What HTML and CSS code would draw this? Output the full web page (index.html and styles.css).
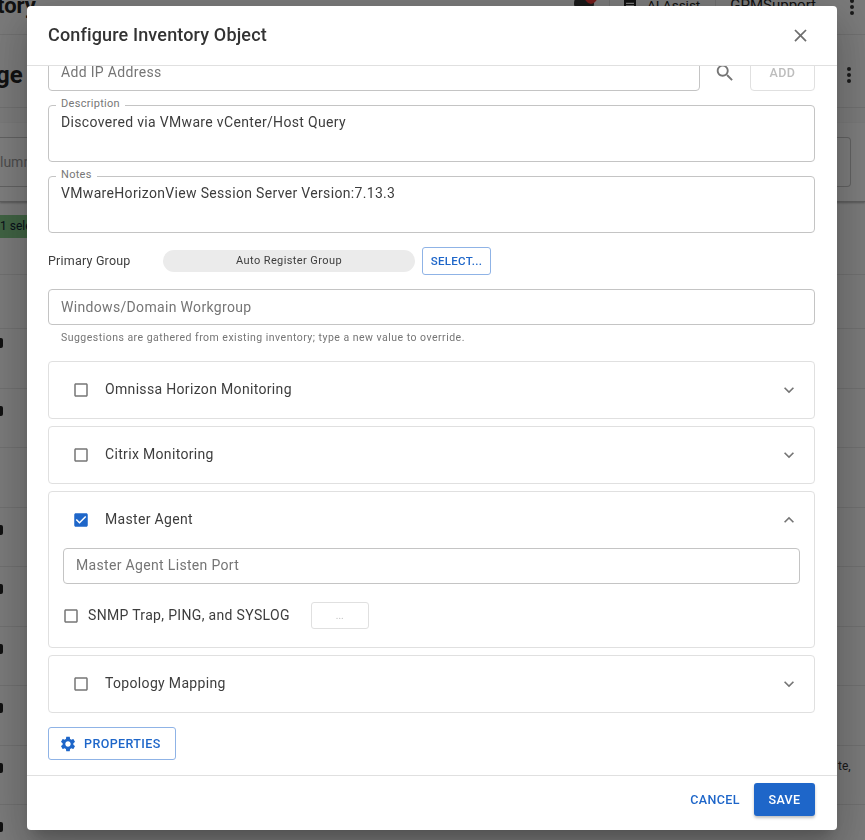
FILE: index.html
```html
<!DOCTYPE html>
<html lang="en">
<head>
<meta charset="utf-8">
<title>Configure Inventory Object</title>
<link rel="stylesheet" href="styles.css">
</head>
<body>
<div class="page">
  <header class="topbar">
    <span class="app-title">tory</span>
    <div class="top-actions">
      <span class="avatar"><span class="avatar-badge"></span></span>
      <span class="top-sep"></span>
      <svg class="ai-icon" viewBox="0 0 24 24"><path d="M3 3h18v18H3zM6 7v2h12V7zm0 4v2h12v-2zm0 4v2h12v-2z"/></svg>
      <span class="top-text">AI Assist</span>
      <span class="top-sep"></span>
      <span class="top-user">GPMSupport</span>
      <span class="dots"><i></i><i></i><i></i></span>
    </div>
  </header>
  <div class="title-band">
    <span class="page-title">ge</span>
    <span class="dots"><i></i><i></i><i></i></span>
  </div>
  <div class="filter-card">
    <div class="filter-box">lumn</div>
  </div>
  <div class="chip-row"><span class="chip">1 sele</span></div>
  <div class="row row-first"></div>
  <div class="row row-short"><i class="mark"></i></div>
  <div class="row"><i class="mark"></i></div>
  <div class="row"></div>
  <div class="row"><i class="mark"></i></div>
  <div class="row"><i class="mark"></i></div>
  <div class="row"><i class="mark"></i></div>
  <div class="row"><i class="mark"></i></div>
  <div class="row row-note"><i class="mark"></i><span class="row-note-text">te,</span></div>
  <div class="row"><i class="mark"></i></div>
</div>

<div class="scrim"></div>

<div class="dialog" role="dialog" aria-label="Configure Inventory Object">
  <div class="dialog-head">
    <h2 class="dialog-title">Configure Inventory Object</h2>
    <svg class="close-icon" viewBox="0 0 24 24"><path d="M19 6.41 17.59 5 12 10.59 6.41 5 5 6.41 10.59 12 5 17.59 6.41 19 12 13.41 17.59 19 19 17.59 13.41 12z"/></svg>
  </div>

  <div class="dialog-body">
    <div class="scroll-inner">
      <div class="ip-row">
        <div class="field field-single field-raised grow"><span class="placeholder">Add IP Address</span></div>
        <svg class="search-icon" viewBox="0 0 24 24"><path d="M15.5 14h-.79l-.28-.27C15.41 12.59 16 11.11 16 9.5 16 5.91 13.09 3 9.5 3S3 5.91 3 9.5 5.91 16 9.5 16c1.61 0 3.09-.59 4.23-1.57l.27.28v.79l5 4.99L20.49 19l-4.99-5zm-6 0C7.01 14 5 11.99 5 9.5S7.01 5 9.5 5 14 7.01 14 9.5 11.99 14 9.5 14z"/></svg>
        <button class="btn-add" disabled>ADD</button>
      </div>

      <div class="field field-multi">
        <span class="float-label">Description</span>
        <span class="value">Discovered via VMware vCenter/Host Query</span>
      </div>

      <div class="field field-multi">
        <span class="float-label">Notes</span>
        <span class="value">VMwareHorizonView Session Server Version:7.13.3</span>
      </div>

      <div class="group-row">
        <span class="group-label">Primary Group</span>
        <span class="group-pill">Auto Register Group</span>
        <button class="btn-select">SELECT...</button>
      </div>

      <div class="field field-single"><span class="placeholder">Windows/Domain Workgroup</span></div>
      <p class="helper">Suggestions are gathered from existing inventory; type a new value to override.</p>

      <section class="accordion accordion-first">
        <div class="acc-summary">
          <svg class="check" viewBox="0 0 24 24"><path d="M19 5v14H5V5h14m0-2H5c-1.1 0-2 .9-2 2v14c0 1.1.9 2 2 2h14c1.1 0 2-.9 2-2V5c0-1.1-.9-2-2-2z"/></svg>
          <span class="acc-label">Omnissa Horizon Monitoring</span>
          <svg class="chevron" viewBox="0 0 24 24"><path d="M16.59 8.59 12 13.17 7.41 8.59 6 10l6 6 6-6z"/></svg>
        </div>
      </section>

      <section class="accordion">
        <div class="acc-summary">
          <svg class="check" viewBox="0 0 24 24"><path d="M19 5v14H5V5h14m0-2H5c-1.1 0-2 .9-2 2v14c0 1.1.9 2 2 2h14c1.1 0 2-.9 2-2V5c0-1.1-.9-2-2-2z"/></svg>
          <span class="acc-label">Citrix Monitoring</span>
          <svg class="chevron" viewBox="0 0 24 24"><path d="M16.59 8.59 12 13.17 7.41 8.59 6 10l6 6 6-6z"/></svg>
        </div>
      </section>

      <section class="accordion">
        <div class="acc-summary">
          <svg class="check check-on" viewBox="0 0 24 24"><path d="M19 3H5c-1.11 0-2 .9-2 2v14c0 1.1.89 2 2 2h14c1.11 0 2-.9 2-2V5c0-1.1-.89-2-2-2zm-9 14l-5-5 1.41-1.41L10 14.17l7.59-7.59L19 8l-9 9z"/></svg>
          <span class="acc-label">Master Agent</span>
          <svg class="chevron" viewBox="0 0 24 24"><path d="M12 8l-6 6 1.41 1.41L12 10.83l4.59 4.58L18 14z"/></svg>
        </div>
        <div class="acc-details">
          <div class="field field-single field-raised"><span class="placeholder">Master Agent Listen Port</span></div>
          <div class="snmp-row">
            <svg class="check check-inline" viewBox="0 0 24 24"><path d="M19 5v14H5V5h14m0-2H5c-1.1 0-2 .9-2 2v14c0 1.1.9 2 2 2h14c1.1 0 2-.9 2-2V5c0-1.1-.9-2-2-2z"/></svg>
            <span class="acc-label snmp-label">SNMP Trap, PING, and SYSLOG</span>
            <button class="btn-more" disabled>...</button>
          </div>
        </div>
      </section>

      <section class="accordion">
        <div class="acc-summary">
          <svg class="check" viewBox="0 0 24 24"><path d="M19 5v14H5V5h14m0-2H5c-1.1 0-2 .9-2 2v14c0 1.1.9 2 2 2h14c1.1 0 2-.9 2-2V5c0-1.1-.9-2-2-2z"/></svg>
          <span class="acc-label">Topology Mapping</span>
          <svg class="chevron" viewBox="0 0 24 24"><path d="M16.59 8.59 12 13.17 7.41 8.59 6 10l6 6 6-6z"/></svg>
        </div>
      </section>

      <button class="btn-props">
        <svg class="gear" viewBox="0 0 24 24"><path d="M19.14 12.94c.04-.3.06-.61.06-.94 0-.32-.02-.64-.07-.94l2.03-1.58c.18-.14.23-.41.12-.61l-1.92-3.32c-.12-.22-.37-.29-.59-.22l-2.39.96c-.5-.38-1.03-.7-1.62-.94l-.36-2.54c-.04-.24-.24-.41-.48-.41h-3.84c-.24 0-.43.17-.47.41l-.36 2.54c-.59.24-1.13.57-1.62.94l-2.39-.96c-.22-.08-.47 0-.59.22L2.74 8.87c-.12.21-.08.47.12.61l2.03 1.58c-.05.3-.09.63-.09.94s.02.64.07.94l-2.03 1.58c-.18.14-.23.41-.12.61l1.92 3.32c.12.22.37.29.59.22l2.39-.96c.5.38 1.03.7 1.62.94l.36 2.54c.05.24.24.41.48.41h3.84c.24 0 .44-.17.47-.41l.36-2.54c.59-.24 1.13-.56 1.62-.94l2.39.96c.22.08.47 0 .59-.22l1.92-3.32c.12-.22.07-.47-.12-.61l-2.01-1.58zM12 15.6c-1.98 0-3.6-1.62-3.6-3.6s1.62-3.6 3.6-3.6 3.6 1.62 3.6 3.6-1.62 3.6-3.6 3.6z"/></svg>
        PROPERTIES
      </button>
    </div>
  </div>

  <div class="dialog-foot">
    <button class="btn-cancel">CANCEL</button>
    <button class="btn-save">SAVE</button>
  </div>
</div>
</body>
</html>
```

FILE: styles.css
```css
* { box-sizing: border-box; }
html, body { margin: 0; height: 100%; overflow: hidden; }
body {
  font-family: Roboto, "Liberation Sans", sans-serif;
  background: #f5f5f5;
  color: #333;
}
button { font-family: inherit; margin: 0; }

/* page behind the dialog */
.page { margin-top: -24px; width: 865px; color: #222; }
.topbar {
  height: 59px;
  padding-top: 16px;
  display: flex;
  justify-content: space-between;
  align-items: flex-start;
  border-bottom: 1px solid #e0e0e0;
}
.app-title { font-size: 22px; font-weight: 700; line-height: 24px; margin-left: -3px; margin-top: 2px; }
.top-actions { display: flex; align-items: flex-start; padding-right: 11px; }
.avatar { width: 20px; height: 24px; background: #333; border-radius: 50%; position: relative; }
.avatar-badge { position: absolute; left: 10px; top: -8px; width: 14px; height: 20px; border-radius: 50%; background: #e53935; }
.top-sep { width: 1px; height: 36px; background: #ddd; margin: 0 14px 0 15px; }
.ai-icon { width: 16px; height: 16px; margin: 6px 9px 0 -2px; fill: #222; }
.top-text { font-size: 13.5px; line-height: 22px; margin-top: 2px; }
.top-user { font-size: 15px; line-height: 22px; margin-top: 2px; margin-right: 34px; }
.dots { display: flex; flex-direction: column; gap: 2px; width: 4px; margin-top: 7px; }
.dots i { width: 4px; height: 4px; border-radius: 50%; background: #333; display: block; }
.title-band {
  height: 73px;
  padding: 7px 14px 0 0;
  display: flex;
  justify-content: space-between;
  align-items: center;
  border-bottom: 1px solid #e0e0e0;
}
.title-band .dots { margin-top: 0; }
.page-title { font-size: 24px; font-weight: 700; margin-left: -4px; }
.filter-card {
  margin-top: 15px;
  height: 79px;
  padding-top: 14px;
  background: #fafafa;
  border-bottom: 1px solid #bbb;
  box-shadow: 0 1px 2px rgba(0,0,0,.3);
}
.filter-box {
  height: 50px;
  width: 851px;
  border: 1px solid #c4c4c4;
  border-left: 0;
  border-radius: 0 4px 4px 0;
  color: #999;
  font-size: 14px;
  line-height: 48px;
}
.chip-row { height: 73px; padding-top: 13px; border-bottom: 1px solid #e0e0e0; }
.chip { display: block; height: 23px; background: #7fc586; color: #123; font-size: 12px; line-height: 23px; width: 200px; }
.row { height: 59.5px; padding-top: 17px; border-bottom: 1px solid #e0e0e0; position: relative; }
.row-first { height: 54px; }
.row-short { padding-top: 9px; }
.mark { display: block; width: 3px; height: 10px; background: #222; border-radius: 0 2px 2px 0; }
.row-note-text { position: absolute; left: 838px; top: 13px; font-size: 12px; color: #333; }

.scrim { position: fixed; inset: 0; background: rgba(0,0,0,.5); }

/* dialog */
.dialog {
  position: fixed;
  left: 27px;
  top: 6px;
  width: 810px;
  height: 824px;
  background: #fff;
  border-radius: 4px;
  display: flex;
  flex-direction: column;
  box-shadow: 0 11px 15px -7px rgba(0,0,0,.2), 0 24px 38px 3px rgba(0,0,0,.14), 0 9px 46px 8px rgba(0,0,0,.12);
}
.dialog-head {
  height: 60px;
  flex: none;
  padding: 0 27px 0 21px;
  display: flex;
  align-items: center;
  justify-content: space-between;
  border-bottom: 1px solid #e0e0e0;
}
.dialog-title { margin: 0 0 2px; font-size: 18px; font-weight: 500; color: #333; letter-spacing: .15px; }
.close-icon { width: 21px; height: 21px; fill: #6e6e6e; margin-right: -1px; }

.dialog-body { flex: 1; min-height: 0; overflow: hidden; }
.scroll-inner { margin-top: -11px; padding: 0 22px 0 21px; }

.field {
  border: 1px solid #c4c4c4;
  border-radius: 4px;
  padding: 0 12px;
  font-size: 14px;
  letter-spacing: .33px;
  position: relative;
}
.grow { flex: 1; }
.field-single { height: 36px; display: flex; align-items: center; }
.field-raised { padding-bottom: 2px; }
.field-multi { height: 57px; margin-top: 14px; padding-top: 6px; line-height: 20px; }
.placeholder { color: #757575; }
.value { color: #3d3d3d; }
.float-label {
  position: absolute;
  left: 7px;
  top: -9px;
  padding: 0 5px;
  background: #fff;
  font-size: 11px;
  line-height: 14px;
  color: #777;
  letter-spacing: .3px;
}

.ip-row { display: flex; align-items: center; height: 36px; }
.search-icon { width: 22px; height: 22px; fill: #757575; margin: 0 14px; flex: none; }
.btn-add {
  width: 65px;
  height: 36px;
  background: #fff;
  border: 1px solid #e0e0e0;
  border-radius: 4px;
  color: #bdbdbd;
  font-size: 12.5px;
  font-weight: 500;
  letter-spacing: .4px;
  padding: 0 0 2px;
}

.group-row { display: flex; align-items: center; margin-top: 14px; height: 28px; }
.group-label { width: 115px; margin-bottom: 2px; font-size: 12.5px; color: #3d3d3d; letter-spacing: .2px; }
.group-pill {
  width: 252px;
  height: 22px;
  border-radius: 11px;
  background: #ebebeb;
  color: #3d3d3d;
  font-size: 11px;
  line-height: 20px;
  padding-top: 1px;
  text-align: center;
  letter-spacing: .4px;
}
.btn-select {
  width: 69px;
  height: 28px;
  margin-left: 7px;
  background: #fff;
  border: 1px solid #8fb3e6;
  border-radius: 3px;
  color: #1e66c9;
  font-size: 11.5px;
  font-weight: 500;
  letter-spacing: .3px;
  padding: 0;
}
.group-row + .field { margin-top: 14px; }
.helper { margin: 6px 0 0 13px; font-size: 10.5px; line-height: 14px; color: #757575; letter-spacing: .485px; }

.accordion { border: 1px solid #e0e0e0; border-radius: 4px; margin-top: 7px; }
.accordion-first { margin-top: 16px; }
.acc-summary { height: 56px; display: flex; align-items: center; padding: 0 15px 0 23px; }
.check { width: 18px; height: 18px; fill: #757575; flex: none; }
.check-on { fill: #1e66c9; }
.acc-label { flex: 1; margin: 0 0 2px 15px; font-size: 14px; color: #3d3d3d; letter-spacing: .33px; }
.chevron { width: 20px; height: 20px; fill: #757575; flex: none; }
.acc-details { padding: 0 14px 18px; }
.snmp-row { display: flex; align-items: center; margin-top: 18px; height: 27px; }
.check-inline { margin-left: -1px; }
.snmp-label { flex: none; margin-left: 8px; }
.btn-more {
  width: 58px;
  height: 27px;
  margin-left: 21px;
  background: #fff;
  border: 1px solid #e0e0e0;
  border-radius: 3px;
  color: #bdbdbd;
  font-size: 10px;
  padding: 0;
}

.btn-props {
  display: flex;
  align-items: center;
  gap: 7px;
  width: 128px;
  height: 33px;
  margin-top: 14px;
  padding: 0 0 0 10px;
  background: #fff;
  border: 1px solid #8fb3e6;
  border-radius: 3px;
  color: #1e66c9;
  font-size: 12.5px;
  font-weight: 500;
  letter-spacing: .4px;
}
.gear { width: 18px; height: 18px; fill: #1e66c9; }

.dialog-foot {
  height: 55px;
  flex: none;
  border-top: 1px solid #e0e0e0;
  display: flex;
  align-items: flex-start;
  justify-content: flex-end;
  padding: 7px 22px 0 0;
}
.btn-cancel {
  height: 33px;
  border: 0;
  background: none;
  color: #1e66c9;
  font-size: 12.5px;
  font-weight: 500;
  letter-spacing: .4px;
  padding: 0;
  margin-right: 14px;
}
.btn-save {
  width: 61px;
  height: 33px;
  border: 0;
  border-radius: 3px;
  background: #1e66c9;
  color: #fff;
  font-size: 12.5px;
  font-weight: 500;
  letter-spacing: .4px;
  padding: 0;
  box-shadow: 0 2px 3px rgba(0,0,0,.25);
}
```
